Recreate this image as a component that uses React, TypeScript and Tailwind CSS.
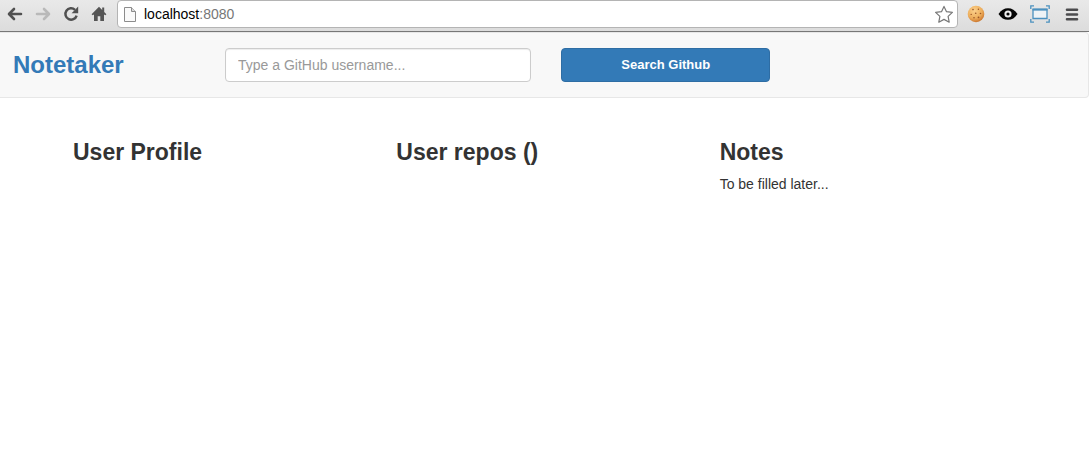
import type { ReactNode } from 'react';

function BackIcon() {
  return (
    <svg width="16" height="14" viewBox="0 0 16 14" fill="none" stroke="currentColor" strokeWidth="2.6" strokeLinecap="round" strokeLinejoin="round">
      <path d="M7 2 2 7l5 5M2.5 7H14" />
    </svg>
  );
}

function ReloadIcon() {
  return (
    <svg width="16" height="16" viewBox="0 0 16 16" fill="none">
      <path d="M13.6 9.6A5.7 5.7 0 1 1 12 3.8" stroke="#505050" strokeWidth="2.5" />
      <path d="M15.2.6v6.6H8.6z" fill="#505050" />
    </svg>
  );
}

function HomeIcon() {
  return (
    <svg width="16" height="16" viewBox="0 0 16 16" fill="#555">
      <path d="M8 .8.6 8.3l1 1L3 8.4V15h3.7v-4.7h2.6V15H13V8.4l1.400.9 1-1-2.200-2.300V1.400h-2v2.500z" />
    </svg>
  );
}

function PageIcon() {
  return (
    <svg width="12" height="15" viewBox="0 0 12 15" fill="#fafafa" stroke="#8c8c8c">
      <path d="M.5.5h7l4 4v10H.5z" />
      <path d="M7.5.5v4h4" fill="#ddd" />
    </svg>
  );
}

function StarIcon() {
  return (
    <svg width="20" height="19" viewBox="0 0 20 19" fill="#fff" stroke="#777" strokeWidth="1.2" strokeLinejoin="round">
      <path d="m10 1.400 2.500 5.300 5.900.7-4.300 4 1.100 5.800-5.200-2.800-5.200 2.800 1.100-5.800-4.300-4 5.900-.7z" />
    </svg>
  );
}

function CookieIcon() {
  return (
    <svg width="18" height="18" viewBox="0 0 18 18">
      <defs>
        <radialGradient id="cookie" cx=".4" cy=".3" r=".7">
          <stop offset="0" stopColor="#fbd08b" />
          <stop offset=".65" stopColor="#edae5c" />
          <stop offset="1" stopColor="#cc7830" />
        </radialGradient>
      </defs>
      <circle cx="9" cy="9" r="8.3" fill="url(#cookie)" />
      <g fill="#9a5526">
        <circle cx="6" cy="4.6" r=".8" />
        <circle cx="11.4" cy="4.2" r=".7" />
        <circle cx="8.7" cy="8.2" r=".8" />
        <circle cx="4.2" cy="9.4" r=".7" />
        <circle cx="13.5" cy="8.5" r=".8" />
        <circle cx="7" cy="12.8" r=".8" />
        <circle cx="11.5" cy="12.3" r=".9" />
      </g>
    </svg>
  );
}

function EyeIcon() {
  return (
    <svg width="20" height="14" viewBox="0 0 20 14">
      <path d="M.5 7C3 3 6.2 1.2 10 1.2S17 3 19.5 7C17 11 13.8 12.8 10 12.8S3 11 .5 7z" fill="#050505" />
      <circle cx="10" cy="7" r="3.6" fill="#eee" />
      <circle cx="10" cy="7" r="1.6" fill="#050505" />
    </svg>
  );
}

function CaptureIcon() {
  return (
    <svg width="20" height="18" viewBox="0 0 20 18" fill="none" stroke="#4b91bf">
      <path d="M.8 4V.8h3.200M16 .8h3.200V4M19.200 14v3.200H16M4 17.200H.8V14" strokeWidth="1.3" />
      <path d="M3 4.500h14v9H3z" fill="#eef3f6" strokeWidth="1.3" />
      <path d="M2.500 4.500h15" strokeWidth="2" />
    </svg>
  );
}

function MenuIcon() {
  return (
    <svg width="14" height="13" viewBox="0 0 14 13" stroke="#4b4b4d" strokeWidth="2.6" strokeLinecap="round">
      <path d="M2 1.8h10M2 6.5h10M2 11.2h10" />
    </svg>
  );
}

function ToolButton({ label, className, children }: { label: string; className: string; children: ReactNode }) {
  return (
    <button type="button" aria-label={label} className={`flex h-5 w-5 shrink-0 items-center justify-center ${className}`}>
      {children}
    </button>
  );
}

function BrowserBar() {
  return (
    <div className="flex h-8 items-start border-b border-[#777] bg-linear-to-b from-[#e9e9e9] to-[#dcdcdc] pr-[7px] pl-[5px]">
      <div className="flex shrink-0 gap-2 pt-1">
        <ToolButton label="Back" className="text-[#505050]"><BackIcon /></ToolButton>
        <ToolButton label="Forward" className="-scale-x-100 text-[#b9b9b9]"><BackIcon /></ToolButton>
        <ToolButton label="Reload" className=""><ReloadIcon /></ToolButton>
        <ToolButton label="Home" className=""><HomeIcon /></ToolButton>
      </div>
      <div className="ml-2 flex h-7 min-w-0 flex-1 items-center rounded-sm border border-[#b4b4b4] bg-white pr-[3px] pl-1.5">
        <PageIcon />
        <a href="http://localhost:8080" className="ml-2 flex-1 text-sm text-black">
          localhost<span className="text-[#777]">:8080</span>
        </a>
        <ToolButton label="Bookmark this page" className=""><StarIcon /></ToolButton>
      </div>
      <div className="ml-2 flex shrink-0 gap-3 pt-1">
        <ToolButton label="Cookies" className=""><CookieIcon /></ToolButton>
        <ToolButton label="View" className=""><EyeIcon /></ToolButton>
        <ToolButton label="Capture window" className=""><CaptureIcon /></ToolButton>
        <ToolButton label="Menu" className=""><MenuIcon /></ToolButton>
      </div>
    </div>
  );
}

function Panel({ title, children }: { title: ReactNode; children?: ReactNode }) {
  return (
    <section className="px-[15px]">
      <h2 className="mb-[9px] text-[23px] leading-[26px] font-bold">{title}</h2>
      {children}
    </section>
  );
}

export default function App() {
  return (
    <div className="min-h-screen bg-white font-['Helvetica_Neue','Liberation_Sans',Arial,sans-serif] text-sm text-[#333]">
      <BrowserBar />
      <nav className="flex items-center rounded-r border border-l-0 border-[#e7e7e7] bg-[#f8f8f8] py-[15px] pl-[13px]">
        <h1 className="w-[212px] shrink-0 text-2xl font-bold text-[#337ab7]">Notetaker</h1>
        <form className="flex flex-1 gap-[30px]" onSubmit={(event) => event.preventDefault()}>
          <input
            type="text"
            aria-label="GitHub username"
            placeholder="Type a GitHub username..."
            className="h-[34px] w-[35.5%] rounded border border-[#ccc] bg-white px-3 text-sm shadow-[inset_0_1px_1px_rgba(0,0,0,0.075)] placeholder:text-[#999]"
          />
          <button type="submit" className="h-[34px] w-[24.2%] rounded border border-[#2e6da4] bg-[#337ab7] text-[13px] font-bold text-white">
            Search Github
          </button>
        </form>
      </nav>
      <main className="grid grid-cols-3 pt-[41px] pr-[61px] pl-[58px]">
        <Panel title="User Profile" />
        <Panel title="User repos ()" />
        <Panel title="Notes">
          <p className="leading-5">To be filled later...</p>
        </Panel>
      </main>
    </div>
  );
}
